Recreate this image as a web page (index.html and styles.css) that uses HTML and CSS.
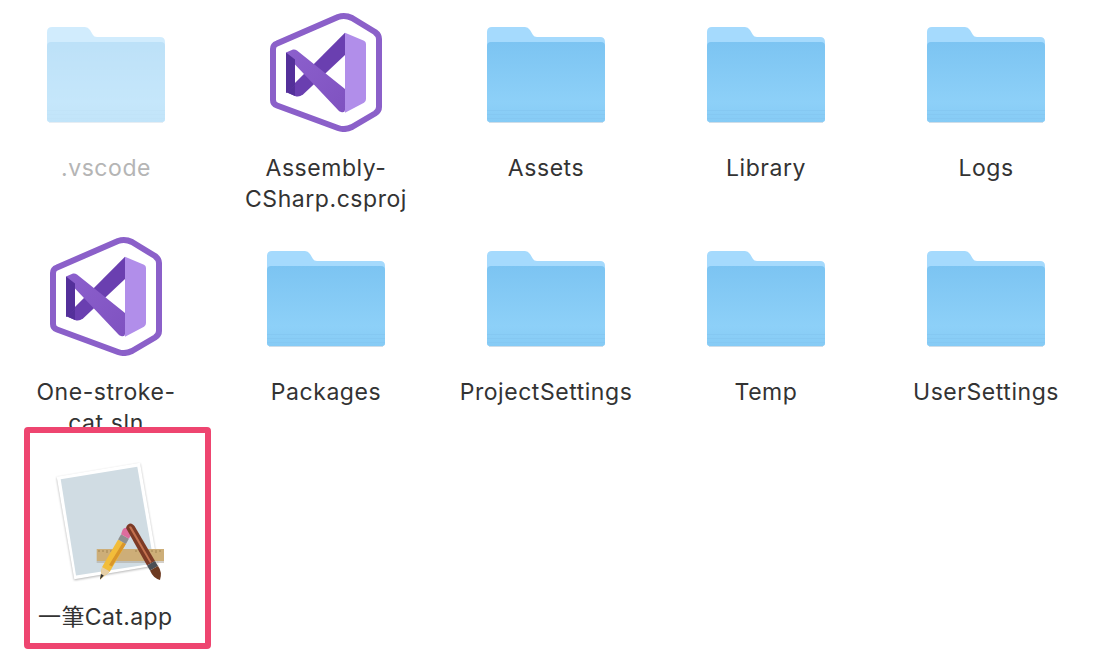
FILE: index.html
```html
<!DOCTYPE html>
<html lang="en">
<head>
    <meta charset="UTF-8">
    <meta name="viewport" content="width=device-width, initial-scale=1.0">
    <title>One-stroke-cat build folder</title>
    <link rel="stylesheet" href="styles.css">
</head>
<body>
    <!-- shared icons -->
    <svg class="defs" width="0" height="0">
        <defs>
            <linearGradient id="folder-front" x1="0" y1="0" x2="0" y2="1">
                <stop offset="0" stop-color="#7cc4f2"/>
                <stop offset="0.75" stop-color="#8dd0f8"/>
                <stop offset="1" stop-color="#86cbf5"/>
            </linearGradient>
            <linearGradient id="vs-band" x1="0" y1="0" x2="1" y2="1">
                <stop offset="0" stop-color="#8c60cd"/>
                <stop offset="1" stop-color="#7f52c0"/>
            </linearGradient>
            <symbol id="folder" viewBox="0 0 120 120">
                <path d="M1 20 Q1 15 6 15 H39 Q42 15 44 18 L47 23 Q48 25 51 25 H114 Q119 25 119 30 V107 Q119 110 116 110 H4 Q1 110 1 107 Z" fill="#a5dafd"/>
                <path d="M1 34 Q1 30 5 30 H115 Q119 30 119 34 V107 Q119 110 116 110 H4 Q1 110 1 107 Z" fill="url(#folder-front)"/>
                <rect x="1" y="98" width="118" height="1" fill="#85c8f2"/>
                <rect x="1" y="102" width="118" height="1" fill="#85c8f2"/>
                <rect x="1" y="106" width="118" height="1" fill="#85c8f2"/>
                <rect x="3" y="110" width="114" height="1" fill="#cfdde8"/>
            </symbol>
            <symbol id="vs-project" viewBox="0 0 120 120">
                <path d="M7 37 Q7 33 11 31.5 L72 5 Q79 2.5 86 6 L109 20 Q113 23 113 27 V95 Q113 99 109 101.5 L86 115 Q79 118.5 72 116 L11 93.5 Q7 92 7 88 Z" fill="#fff" stroke="#8b60c9" stroke-width="6" stroke-linejoin="round"/>
                <path d="M79 20.7 L98 28.7 Q100 29.7 100 32 V87 Q100 89.7 98 90.7 L79 100.7 Z" fill="#b18eea"/>
                <path d="M79 20.7 V43 L37 82.5 Q33 85.5 29 84 L20 80 Z" fill="#6a3fb0"/>
                <path d="M20 40.5 L27 37.5 Q29 37 31 38.5 L79 77 V98 Q79 101 75 100 Q73 99.5 72 98 L20 43 Z" fill="url(#vs-band)"/>
                <path d="M20 40.5 L29 47.5 V73 L20 81 Z" fill="#54309a"/>
                <path d="M29 73 V84 L20 80 V81 Z" fill="#54309a"/>
            </symbol>
        </defs>
    </svg>

    <main class="finder-grid">
        <div class="item item-hidden">
            <svg class="icon"><use href="#folder"/></svg>
            <div class="label">.vscode</div>
        </div>
        <div class="item">
            <svg class="icon"><use href="#vs-project"/></svg>
            <div class="label">Assembly-CSharp.csproj</div>
        </div>
        <div class="item">
            <svg class="icon"><use href="#folder"/></svg>
            <div class="label">Assets</div>
        </div>
        <div class="item">
            <svg class="icon"><use href="#folder"/></svg>
            <div class="label">Library</div>
        </div>
        <div class="item">
            <svg class="icon"><use href="#folder"/></svg>
            <div class="label">Logs</div>
        </div>

        <div class="item">
            <svg class="icon"><use href="#vs-project"/></svg>
            <div class="label">One-stroke-cat.sln</div>
        </div>
        <div class="item">
            <svg class="icon"><use href="#folder"/></svg>
            <div class="label">Packages</div>
        </div>
        <div class="item">
            <svg class="icon"><use href="#folder"/></svg>
            <div class="label">ProjectSettings</div>
        </div>
        <div class="item">
            <svg class="icon"><use href="#folder"/></svg>
            <div class="label">Temp</div>
        </div>
        <div class="item">
            <svg class="icon"><use href="#folder"/></svg>
            <div class="label">UserSettings</div>
        </div>

        <!-- highlighted build output, sits over the clipped label above it -->
        <div class="app-box">
            <svg class="app-icon" width="120" height="130" viewBox="0 0 120 130">
                <path class="app-page" d="M6.7 16.7 L90 2.7 L107.7 105 L24.3 119.3 Z" fill="#fff"/>
                <path d="M10.7 19.3 L87.3 6.7 L104 103.5 L26 115.5 Z" fill="#d0dce3"/>
                <path d="M46.7 101 H114 V103 H46.7 Z" fill="#a9a295" opacity="0.5"/>
                <rect x="46.7" y="89" width="67.3" height="12" fill="#cdae78"/>
                <path d="M49 90 V92 M53 90 V92 M57 90 V93 M61 90 V92 M65 90 V92 M69 90 V93 M86 90 V92 M90 90 V92 M94 90 V93 M98 90 V92 M102 90 V92 M106 90 V93 M110 90 V92" stroke="#8f7443" stroke-width="0.7"/>
                <path d="M50 119.5 L52.1 106.9 L68.1 79.5 L75.9 84 L59.9 111.4 Z" fill="#f2bd3a"/>
                <path d="M62 106.5 L75.9 84 L73 82.3 L59 105 Z" fill="#d9962a"/>
                <path d="M50 119.5 L52.1 106.9 L59.9 111.4 Z" fill="#e6cfa6"/>
                <path d="M50 119.5 L51 114 L53.8 115.6 Z" fill="#333"/>
                <path d="M68.1 79.5 L75.9 84 L78.9 78.8 L71.1 74.3 Z" fill="#8f8f8f"/>
                <path d="M71.1 74.3 L78.9 78.8 L81 75 Q82.5 71 78.5 68.5 Q74.5 66.5 72.5 70 Z" fill="#dd6c9d"/>
                <path d="M76 68 Q77 63.5 81 63.5 Q83 64 84.5 66 L105 101 L97 105.5 Z" fill="#7c3a26"/>
                <path d="M79 67 Q80 65.5 81.5 67 L101.5 102 L100 103 Z" fill="#c4714f"/>
                <path d="M97 105.5 L105 101 L108 106 L100 110.5 Z" fill="#4b4f55"/>
                <path d="M100 110.5 L108 106 Q112.5 112 110 120 Q103 118 100 110.5 Z" fill="#6d3a20"/>
            </svg>
            <div class="app-label">一筆Cat.app</div>
        </div>
    </main>
</body>
</html>
```

FILE: styles.css
```css
html, body {
    margin: 0;
    padding: 0;
    height: 100%;
    background: #ffffff;
    overflow: hidden;
}

body {
    font-family: Inter, "Noto Sans CJK JP", sans-serif;
    color: #333333;
}

.defs {
    display: block;
    height: 0;
}

.finder-grid {
    display: grid;
    grid-template-columns: repeat(5, 220px);
    grid-auto-rows: 224px;
    margin-left: -4px;
}

.item {
    display: flex;
    flex-direction: column;
    align-items: center;
    padding-top: 12px;
}

.icon {
    width: 120px;
    height: 120px;
    flex: none;
}

.label {
    width: 180px;
    margin-top: 21px;
    font-size: 23px;
    letter-spacing: 0.55px;
    line-height: 31px;
    text-align: center;
}

.item-hidden .icon {
    opacity: 0.5;
}

.item-hidden .label {
    color: #b5b5b5;
}

.app-box {
    position: relative;
    box-sizing: border-box;
    width: 187px;
    height: 222px;
    margin: -21px 0 0 28px;
    padding: 27px 0 0 20px;
    background: #ffffff;
    border: 6px solid #ee4570;
    border-radius: 4px;
}

.app-icon {
    display: block;
}

.app-page {
    filter: drop-shadow(0 1px 1px rgba(0, 0, 0, 0.3));
}

.app-label {
    margin: 12px 0 0 -12px;
    font-size: 23px;
    letter-spacing: 0.4px;
    line-height: 31px;
    white-space: nowrap;
}
```
